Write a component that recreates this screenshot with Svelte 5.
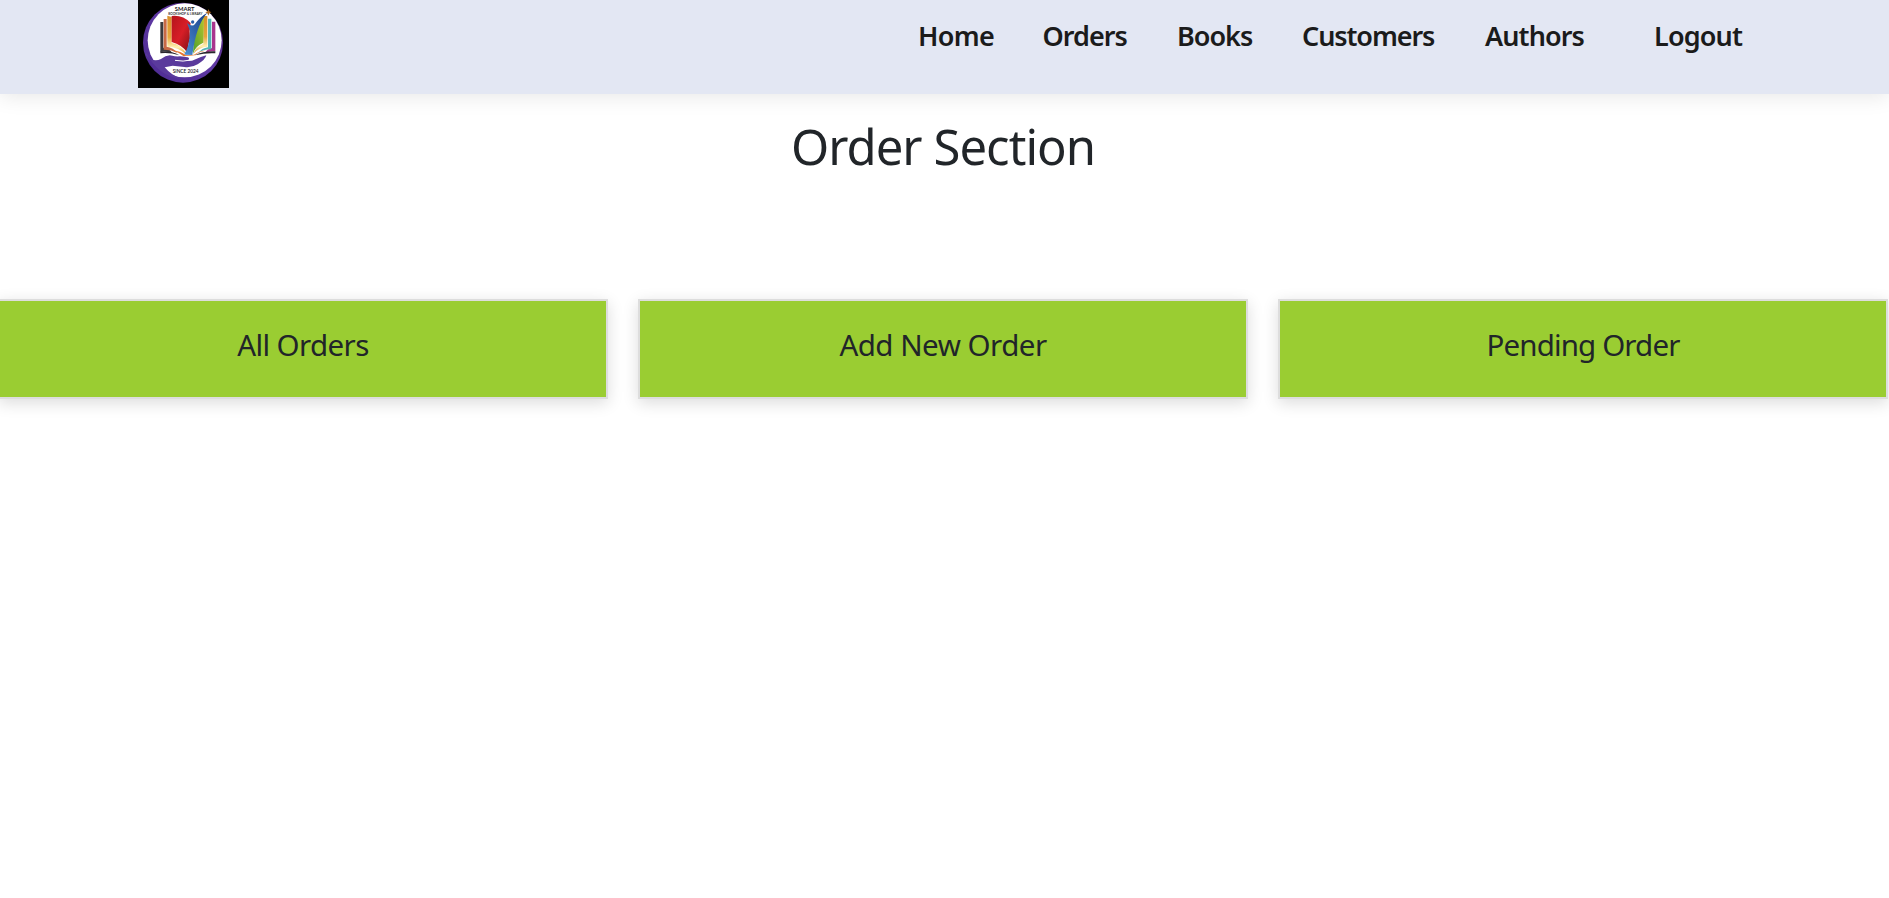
<script>
  const links = [
    { label: 'Home', width: 124.5, spacing: -0.7 },
    { label: 'Orders', width: 134.5, spacing: -0.95 },
    { label: 'Books', width: 125, spacing: -1 },
    { label: 'Customers', width: 183, spacing: -1.1 },
    { label: 'Authors', width: 169, spacing: -0.9 },
    { label: 'Logout', width: 100, spacing: -0.85 }
  ];
  const cards = [
    { label: 'All Orders', spacing: -0.6 },
    { label: 'Add New Order', spacing: -0.5 },
    { label: 'Pending Order', spacing: -0.85 }
  ];
</script>

<header>
  <svg class="logo" viewBox="24 0 273 264" preserveAspectRatio="none" aria-label="Smart Bookshop and Library">
    <defs>
      <linearGradient id="ring" x1="0" y1="1" x2="1" y2="0">
        <stop offset="0" stop-color="#4b2a91" /><stop offset=".55" stop-color="#6039a4" /><stop offset="1" stop-color="#542373" />
      </linearGradient>
      <linearGradient id="gold" x1="0" y1="0" x2="0" y2="1">
        <stop offset="0" stop-color="#d9902a" /><stop offset=".55" stop-color="#e7a63c" /><stop offset=".8" stop-color="#fff0b0" /><stop offset="1" stop-color="#df921e" />
      </linearGradient>
      <linearGradient id="red" x1="0" y1="0" x2="1" y2="1">
        <stop offset="0" stop-color="#b5141c" /><stop offset=".5" stop-color="#d71e27" /><stop offset="1" stop-color="#7c1015" />
      </linearGradient>
      <linearGradient id="green" x1="0" y1="1" x2="1" y2="0">
        <stop offset="0" stop-color="#4e9f2d" /><stop offset="1" stop-color="#bdc82d" />
      </linearGradient>
      <linearGradient id="blue" x1="0" y1="1" x2="1" y2="0">
        <stop offset="0" stop-color="#4b91d8" /><stop offset="1" stop-color="#173b83" />
      </linearGradient>
    </defs>
    <rect x="24" width="273" height="264" fill="#000" />
    <circle cx="159" cy="128" r="120" fill="url(#ring)" />
    <circle cx="164" cy="121" r="111" fill="#fff" />
    <path d="M91 66h9v77q18 1 27 16-16-6-36-4z" fill="#3c3b3e" />
    <path d="M101 57h9v83q20 2 32 19-20-11-41-10z" fill="#c96a45" />
    <path d="M112 47l13 4v78q30 5 47 36-29-25-60-25z" fill="url(#gold)" />
    <path d="M125 48q33-4 57 21-5 24-2 47-6 16-7 43-17-25-48-33z" fill="url(#red)" />
    <path d="M246 65h10v89q-16-2-31 5 8-13 21-15z" fill="#a9358e" />
    <path d="M234 56h10v92q-23-1-40 12 12-16 30-18z" fill="#55b4b4" />
    <path d="M220 48h12v92q-24 1-42 21 9-22 30-29z" fill="url(#gold)" />
    <path d="M225 46q-34 22-36 115 6-22 31-33l2-74z" fill="url(#green)" />
    <path d="M171 69q16 14 24 3 15-22 37-34-34 38-45 127l-25-1q17-25 18-72z" fill="url(#blue)" />
    <circle cx="188" cy="66" r="5" fill="#285da9" />
    <path d="M91 154q38-1 57 12-29-9-57-6zM256 154q-37-1-62 12 35-8 62-6z" fill="#29272e" />
    <path d="M127 151q28 3 40 15l25-2q17-12 34-12-25 5-31 14l-34 3q-13-11-34-18z" fill="#e8772f" />
    <path d="M236 27l2 7 6 3-6 3-3 7-3-7-6-3 7-3z" fill="#ad671f" />
    <path d="M47 166q23 23 46 11 17-14 34-10 8 3 23 2l23 3q8 2 1 10h12q24-11 43-16-2 12-26 27-18 11-40 8l-35-4-24 5q20 24 49 34-67-5-106-80z" fill="#5a3a9c" />
    <path d="M135 181q25 5 47-1" fill="none" stroke="#fff" stroke-width="3" />
    <g fill="#18161c" text-anchor="middle" font-family="Lato, sans-serif">
      <text x="164" y="34" font-size="17.5" font-weight="700">SMART</text>
      <text x="166" y="43.5" font-size="9.5" font-weight="600" textLength="103" lengthAdjust="spacingAndGlyphs">BOOKSHOP &amp; LIBRARY</text>
      <text x="167" y="219" font-size="15" font-weight="600" textLength="78" lengthAdjust="spacingAndGlyphs">SINCE 2024</text>
    </g>
  </svg>
  <nav>
    {#each links as link}
      <a href="#top" style="width: {link.width}px; letter-spacing: {link.spacing}px">{link.label}</a>
    {/each}
  </nav>
</header>

<main>
  <h1>Order Section</h1>
  <div class="cards">
    {#each cards as card}
      <section class="card" style="letter-spacing: {card.spacing}px">{card.label}</section>
    {/each}
  </div>
</main>

<style>
  :global(body) {
    margin: 0;
    background: #fff;
    color: #212529;
    font-family: "Noto Sans", sans-serif;
  }
  header {
    display: flex;
    box-sizing: border-box;
    height: 94px;
    padding-left: 138px;
    background: #e3e7f3;
    box-shadow: 0 2px 20px rgba(0, 0, 0, .1);
  }
  .logo {
    flex: none;
    width: 91px;
    height: 88px;
  }
  nav {
    display: flex;
    margin-left: 689px;
    padding-top: 16px;
  }
  nav a {
    flex: none;
    color: #1b1b1b;
    font-size: 27px;
    font-weight: 600;
    line-height: 40px;
    text-decoration: none;
    white-space: nowrap;
  }
  main {
    box-sizing: border-box;
    min-height: calc(100vh - 94px);
    padding-top: 22px;
  }
  h1 {
    margin: 0;
    padding-right: 3px;
    font-size: 49px;
    font-weight: 400;
    line-height: 60px;
    letter-spacing: -.95px;
    text-align: center;
  }
  .cards {
    display: grid;
    grid-template-columns: repeat(3, 610px);
    gap: 30px;
    margin: 123px 0 0 -2px;
  }
  .card {
    box-sizing: border-box;
    height: 100px;
    padding-top: 24px;
    border: 2px solid #ddd;
    background: #9acd32;
    box-shadow: 0 4px 15px rgba(0, 0, 0, .14);
    font-size: 29.5px;
    line-height: 40px;
    text-align: center;
  }
</style>
